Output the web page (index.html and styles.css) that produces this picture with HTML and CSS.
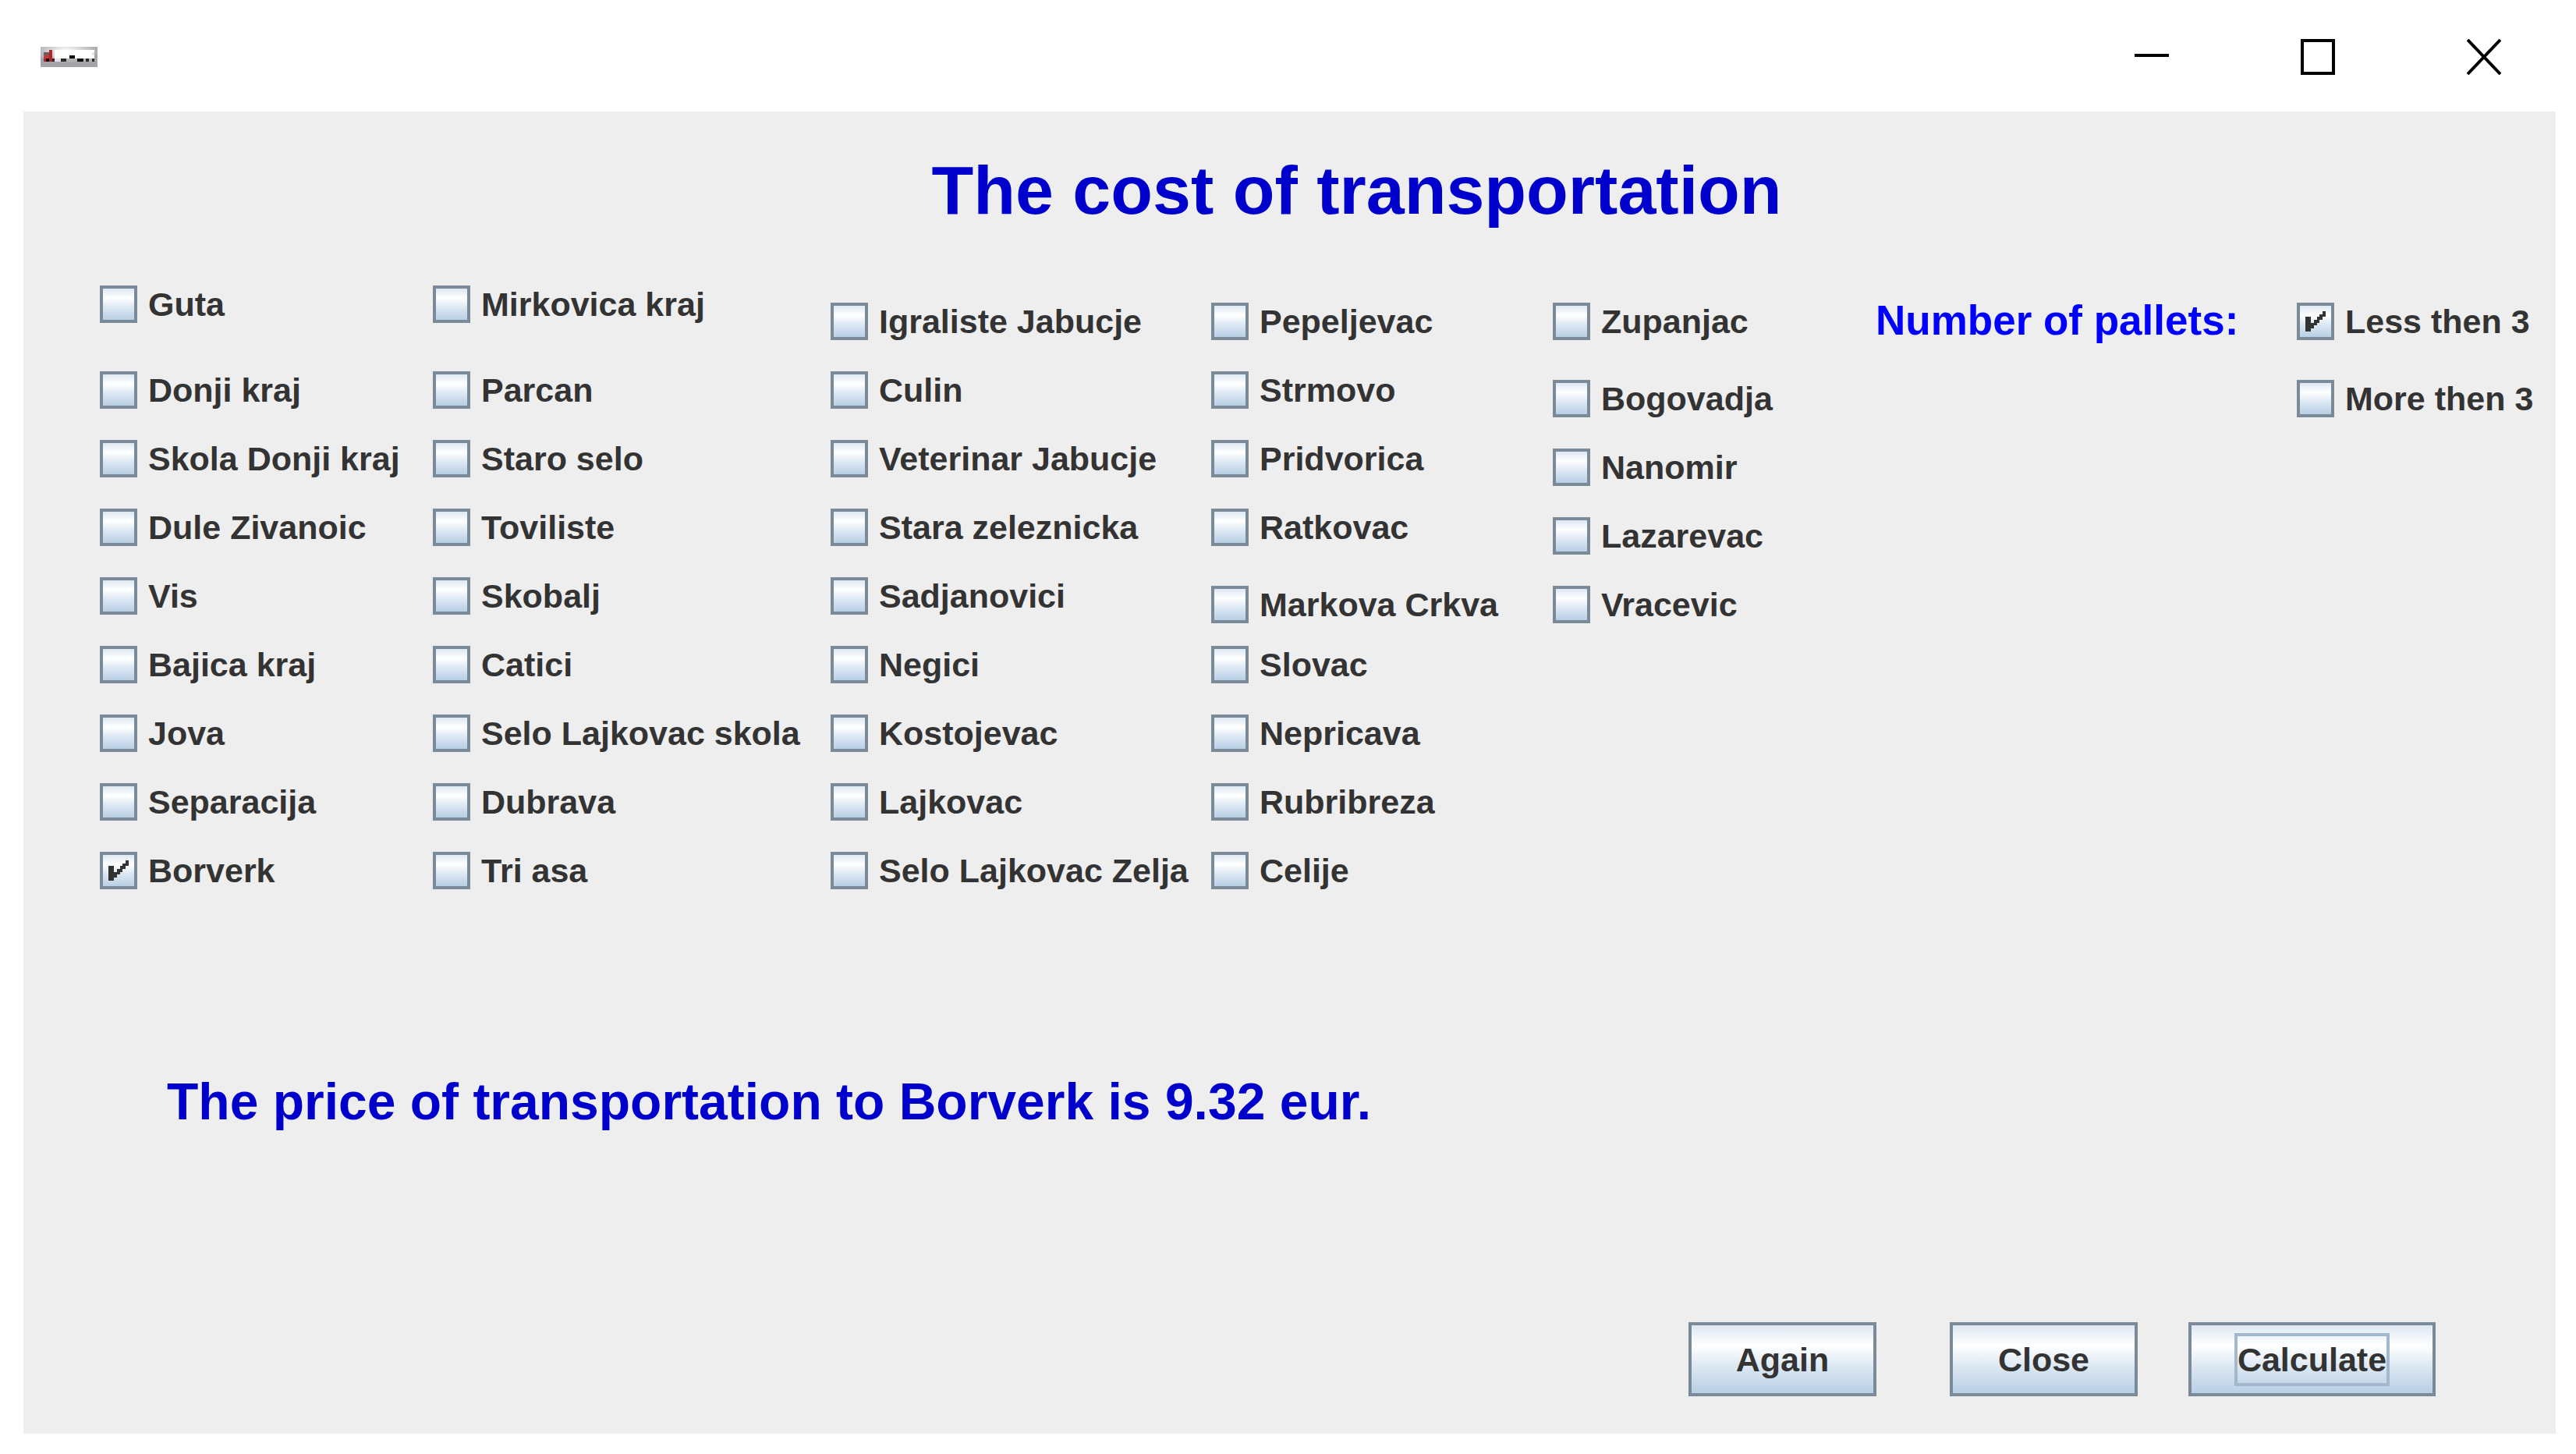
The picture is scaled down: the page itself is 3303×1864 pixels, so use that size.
FILE: index.html
```html
<!DOCTYPE html>
<html lang="en">
<head>
<meta charset="utf-8">
<title>The cost of transportation</title>
<link rel="stylesheet" href="styles.css">
</head>
<body>
<header class="titlebar">
  <svg class="app-icon" viewBox="0 0 20 7" preserveAspectRatio="none" shape-rendering="crispEdges" aria-hidden="true">
    <defs>
      <radialGradient id="sky" cx="0.45" cy="0.2" r="0.6">
        <stop offset="0" stop-color="#ffffff"/>
        <stop offset="0.5" stop-color="#d2d2d6"/>
        <stop offset="1" stop-color="#a4a4a8"/>
      </radialGradient>
    </defs>
    <rect width="20" height="7" fill="url(#sky)"/>
    <path fill="#ffffff" d="M5 1h14v3H5z"/>
    <path fill="#e4e4e8" d="M5 4h2v1H5zM18 2h1v1h-1z"/>
    <path fill="#b4b4b8" d="M9 4h10v1H9z"/>
    <path fill="#b02428" d="M3 1h1v4H3zM1 4h1v1H1z"/>
    <path fill="#c83a3a" d="M1 3h2v1H1z"/>
    <path fill="#6e5c5c" d="M1 2h2v1H1z"/>
    <path fill="#0a0a0a" d="M2 4h1v1H2zM10 3h2v1h-2zM13 4h2v1h-2z"/>
    <path fill="#2a2a2a" d="M4 4h1v1H4zM7 4h2v1H7zM16 4h1v1h-1zM18 4h1v1h-1z"/>
  </svg>
  <div class="window-controls">
    <button type="button" class="window-button" aria-label="Minimize">
      <svg viewBox="0 0 44 46"><path d="M0 21h44" stroke="#000" stroke-width="4"/></svg>
    </button>
    <button type="button" class="window-button" aria-label="Maximize">
      <svg viewBox="0 0 44 46"><path d="M2 2h40v42H2z" fill="none" stroke="#000" stroke-width="4"/></svg>
    </button>
    <button type="button" class="window-button" aria-label="Close window">
      <svg viewBox="0 0 44 46"><path d="M1 1l42 44M43 1L1 45" stroke="#000" stroke-width="4"/></svg>
    </button>
  </div>
</header>
<main class="panel">
  <h1 class="heading">The cost of transportation</h1>
  <form class="form">
    <div class="options">
      <div class="column">
        <label class="option option--lead"><input type="checkbox">Guta</label>
        <label class="option"><input type="checkbox">Donji kraj</label>
        <label class="option"><input type="checkbox">Skola Donji kraj</label>
        <label class="option"><input type="checkbox">Dule Zivanoic</label>
        <label class="option"><input type="checkbox">Vis</label>
        <label class="option"><input type="checkbox">Bajica kraj</label>
        <label class="option"><input type="checkbox">Jova</label>
        <label class="option"><input type="checkbox">Separacija</label>
        <label class="option"><input type="checkbox" checked>Borverk</label>
      </div>
      <div class="column">
        <label class="option option--lead"><input type="checkbox">Mirkovica kraj</label>
        <label class="option"><input type="checkbox">Parcan</label>
        <label class="option"><input type="checkbox">Staro selo</label>
        <label class="option"><input type="checkbox">Toviliste</label>
        <label class="option"><input type="checkbox">Skobalj</label>
        <label class="option"><input type="checkbox">Catici</label>
        <label class="option"><input type="checkbox">Selo Lajkovac skola</label>
        <label class="option"><input type="checkbox">Dubrava</label>
        <label class="option"><input type="checkbox">Tri asa</label>
      </div>
      <div class="column column--lowered">
        <label class="option"><input type="checkbox">Igraliste Jabucje</label>
        <label class="option"><input type="checkbox">Culin</label>
        <label class="option"><input type="checkbox">Veterinar Jabucje</label>
        <label class="option"><input type="checkbox">Stara zeleznicka</label>
        <label class="option"><input type="checkbox">Sadjanovici</label>
        <label class="option"><input type="checkbox">Negici</label>
        <label class="option"><input type="checkbox">Kostojevac</label>
        <label class="option"><input type="checkbox">Lajkovac</label>
        <label class="option"><input type="checkbox">Selo Lajkovac Zelja</label>
      </div>
      <div class="column column--lowered">
        <label class="option"><input type="checkbox">Pepeljevac</label>
        <label class="option"><input type="checkbox">Strmovo</label>
        <label class="option"><input type="checkbox">Pridvorica</label>
        <label class="option option--loose"><input type="checkbox">Ratkovac</label>
        <label class="option option--tight"><input type="checkbox">Markova Crkva</label>
        <label class="option"><input type="checkbox">Slovac</label>
        <label class="option"><input type="checkbox">Nepricava</label>
        <label class="option"><input type="checkbox">Rubribreza</label>
        <label class="option"><input type="checkbox">Celije</label>
      </div>
      <div class="column column--lowered">
        <label class="option option--loose"><input type="checkbox">Zupanjac</label>
        <label class="option"><input type="checkbox">Bogovadja</label>
        <label class="option"><input type="checkbox">Nanomir</label>
        <label class="option"><input type="checkbox">Lazarevac</label>
        <label class="option"><input type="checkbox">Vracevic</label>
      </div>
      <div class="column column--lowered">
        <span class="pallets-label" id="pallets">Number of pallets:</span>
      </div>
      <div class="column column--lowered" role="group" aria-labelledby="pallets">
        <label class="option option--loose"><input type="checkbox" checked>Less then 3</label>
        <label class="option"><input type="checkbox">More then 3</label>
      </div>
    </div>
    <output class="result">The price of transportation to Borverk is 9.32 eur.</output>
    <div class="actions">
      <button type="button" class="action">Again</button>
      <button type="button" class="action">Close</button>
      <button type="button" class="action action--focused"><span class="focus-ring">Calculate</span></button>
    </div>
  </form>
</main>
</body>
</html>
```

FILE: styles.css
```css
* {
  box-sizing: border-box;
}

body {
  display: flex;
  flex-direction: column;
  min-height: 100vh;
  margin: 0;
  padding: 0 26px 26px 30px;
  background: #fff;
  color: #333;
  font: bold 43px/48px "Liberation Sans", Arial, sans-serif;
}

.titlebar {
  display: flex;
  align-items: center;
  justify-content: space-between;
  height: 143px;
  padding: 3px 70px 0 22px;
}

.app-icon {
  width: 73px;
  height: 26px;
}

.window-controls {
  display: flex;
  gap: 169px;
}

.window-button {
  width: 44px;
  height: 46px;
  padding: 0;
  border: 0;
  background: none;
}

.window-button svg {
  display: block;
  width: 44px;
  height: 46px;
}

.panel {
  display: flex;
  flex: 1;
  flex-direction: column;
  padding: 57px 0 48px 98px;
  background: #eee;
}

.heading {
  margin: 0 0 78px;
  padding-left: 74px;
  color: #0000cd;
  font-size: 88px;
  line-height: 88px;
  text-align: center;
}

.form {
  display: flex;
  flex: 1;
  flex-direction: column;
}

.options {
  display: grid;
  grid-template-columns:
    minmax(0, 427fr) minmax(0, 510fr) minmax(0, 488fr) minmax(0, 438fr)
    minmax(0, 414fr) minmax(0, 540fr) minmax(0, 332fr);
}

.column {
  display: flex;
  flex-direction: column;
  align-items: flex-start;
}

.column--lowered {
  padding-top: 22px;
}

.option {
  display: flex;
  align-items: center;
  gap: 14px;
  margin-bottom: 40px;
  white-space: nowrap;
}

.option--lead {
  margin-bottom: 62px;
}

.option--loose {
  margin-bottom: 51px;
}

.option--tight {
  margin-bottom: 29px;
}

.option input {
  flex: none;
  width: 48px;
  height: 48px;
  margin: 0;
  padding: 7px;
  border: 4px solid #7a8a99;
  appearance: none;
  background: linear-gradient(#dde8f3, #fff 30%, #dde8f3 60%, #b8cfe5);
}

.option input:checked::after {
  content: "";
  display: block;
  width: 26px;
  height: 26px;
  background: #333;
  clip-path: polygon(
    0 7px, 7px 7px, 7px 15px, 11px 15px, 11px 11px, 15px 11px,
    15px 7px, 18px 7px, 18px 4px, 22px 4px, 22px 0, 26px 0,
    26px 7px, 22px 7px, 22px 11px, 18px 11px, 18px 15px, 15px 15px,
    15px 18px, 11px 18px, 11px 22px, 7px 22px, 7px 26px, 0 26px
  );
}

.pallets-label {
  color: #00f;
  font-size: 53px;
  line-height: 46px;
  white-space: nowrap;
}

.result {
  margin: 196px 0 0 86px;
  color: #0000cd;
  font-size: 66px;
  line-height: 72px;
}

.actions {
  display: flex;
  justify-content: flex-end;
  margin-top: auto;
  padding-right: 154px;
}

.action {
  min-width: 241px;
  height: 95px;
  margin-left: 94px;
  padding: 0;
  border: 4px solid #7a8a99;
  background: linear-gradient(#dde8f3, #fff 30%, #dde8f3 60%, #b8cfe5);
  color: #333;
  font: inherit;
}

.action--focused {
  min-width: 317px;
  margin-left: 65px;
}

.focus-ring {
  display: inline-block;
  padding: 6px 0;
  border: 4px solid #a3b8cc;
}
```
